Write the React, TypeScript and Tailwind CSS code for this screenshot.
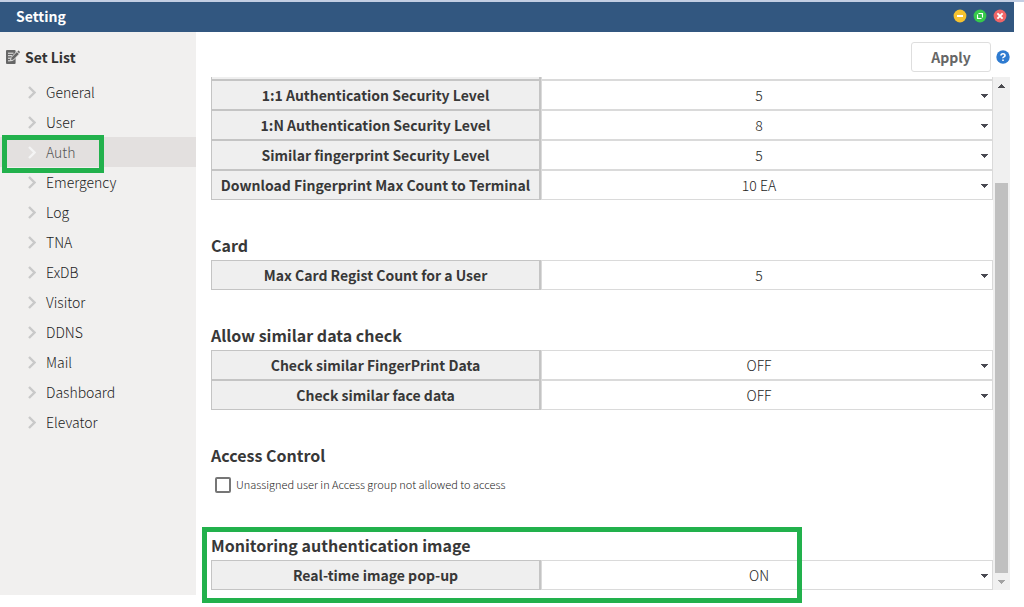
const items = ["General", "User", "Auth", "Emergency", "Log", "TNA", "ExDB", "Visitor", "DDNS", "Mail", "Dashboard", "Elevator"];

function Row({ label, value }: { label: string; value: string }) {
  return (
    <div className="flex h-[30px]">
      <div className="flex w-[330px] items-center justify-center border border-r-2 border-[#c4c4c4] bg-[#efefef] text-[14px] font-bold whitespace-nowrap text-[#383838]">
        {label}
      </div>
      <div className="flex flex-1 items-center border border-[#dadada] pr-1">
        <span className="flex-1 pr-[12px] text-center text-[14px] font-light">{value}</span>
        <svg width="7" height="4" viewBox="0 0 7 4" shapeRendering="crispEdges" className="-ml-[7px] mt-[1px] text-[#4a4a52]">
          <path d="M0 0h7v1H6v1H5v1H4v1H3V3H2V2H1V1H0z" fill="currentColor" />
        </svg>
      </div>
    </div>
  );
}

function Heading({ children }: { children: string }) {
  return <h2 className="flex h-[30px] items-center text-[16px] font-bold whitespace-nowrap text-[#383838]">{children}</h2>;
}

export default function App() {
  return (
    <div className="relative h-[607px] w-[1024px] overflow-hidden bg-white font-['Noto_Sans_CJK_KR','Noto_Sans_CJK_JP',sans-serif] text-[#1c1c1c]">
      <div className="h-[2px] bg-[#c3cee3]" />
      <header className="flex h-[30px] w-[1014px] items-center justify-between bg-[#325780] pr-2 pl-4">
        <h1 className="mb-[2px] text-[14px] font-bold text-white">Setting</h1>
        <div className="-mr-px flex gap-[6px] pb-[2px]">
          <svg width="14" height="14" viewBox="0 0 14 14"><circle cx="7" cy="7" r="6.4" fill="#f6c22f" /><path d="M4 7h6" stroke="#fff" strokeWidth="2" /></svg>
          <svg width="14" height="14" viewBox="0 0 14 14"><circle cx="7" cy="7" r="6.4" fill="#36c84b" /><path d="M5.5 4.5h4v4M8.5 9.5h-4v-4" stroke="#fff" strokeWidth="1.1" fill="none" /><path d="M7.4 4h2.6v2.6zM6.6 10H4V7.4z" fill="#fff" /></svg>
          <svg width="14" height="14" viewBox="0 0 14 14"><circle cx="7" cy="7" r="6.4" fill="#ef6567" /><path d="M4.4 4.4l5.2 5.2M9.6 4.4L4.4 9.6" stroke="#fff" strokeWidth="1.9" /></svg>
        </div>
      </header>
      <div className="flex">
        <aside className="h-[563px] w-[196px] bg-[#f1f0ef] pt-[10px]">
          <div className="flex h-[30px] items-center pl-[6px]">
            <svg width="14" height="14" viewBox="0 0 14 14">
              <rect x="0" y="0" width="9.6" height="14" rx="1" fill="#666" />
              <path d="M2 3.2h5.5M2 5.7h4M2 8.2h2.5M2 10.8h2" stroke="#f1f0ef" strokeWidth="1" />
              <path d="M5 7.6l5.9-6 2.5 2.4-5.9 6-3 .9z" fill="#666" stroke="#f1f0ef" strokeWidth="0.9" />
              <path d="M11.4 1.5l.8-.8q.3-.3.6 0l1 1q.4.3 0 .7l-.8.8z" fill="#666" />
            </svg>
            <span className="ml-[5px] text-[14px] font-bold text-[#333]">Set List</span>
          </div>
          <nav className="mt-[5px] text-[14px] font-light">
            {items.map((t) => (
              <div key={t} className={t === "Auth" ? "flex h-[30px] items-center bg-[#e3e0df] pl-[28px] text-[#555]" : "flex h-[30px] items-center pl-[28px]"}>
                <svg width="8" height="13" viewBox="0 0 8 13" className="mr-[10px]">
                  <path d="M1 1l5.5 5.5L1 12" fill="none" stroke={t === "Auth" ? "#f4f4f4" : "#c9c9c9"} strokeWidth="2.4" />
                </svg>
                {t}
              </div>
            ))}
          </nav>
        </aside>
        <main className="w-[828px] pt-[10px]">
          <div className="ml-[715px] flex h-[30px] items-center">
            <button className="h-[30px] w-[80px] rounded-[3px] border border-[#dedede] text-[14px] font-bold text-[#666]">Apply</button>
            <svg width="14" height="14" viewBox="0 0 14 14" className="ml-[5px]">
              <circle cx="7" cy="7" r="6.7" fill="#2e7bd0" />
              <path d="M5 5.6Q5 3.7 7 3.7T9 5.4Q9 6.3 7.9 6.9T7 8.3M7 9.4v1.5" stroke="#fff" strokeWidth="1.6" fill="none" />
            </svg>
          </div>
          <div className="mt-[5px] ml-[15px] flex h-[513px]">
            <div className="w-[782px]">
              <div className="flex h-[3px]">
                <div className="w-[330px] border border-t-0 border-r-2 border-[#c4c4c4] bg-[#efefef]" />
                <div className="flex-1 border border-t-0 border-[#dadada]" />
              </div>
              <Row label="1:1 Authentication Security Level" value="5" />
              <Row label="1:N Authentication Security Level" value="8" />
              <Row label="Similar fingerprint Security Level" value="5" />
              <Row label="Download Fingerprint Max Count to Terminal" value="10 EA" />
              <div className="h-[30px]" />
              <Heading>Card</Heading>
              <Row label="Max Card Regist Count for a User" value="5" />
              <div className="h-[30px]" />
              <Heading>Allow similar data check</Heading>
              <Row label="Check similar FingerPrint Data" value="OFF" />
              <Row label="Check similar face data" value="OFF" />
              <div className="h-[30px]" />
              <Heading>Access Control</Heading>
              <div className="flex h-[30px] items-center pl-1">
                <span className="h-4 w-4 rounded-[2px] border-2 border-[#767676] bg-white" />
                <span className="mb-[2px] ml-[5px] text-[11px] font-light whitespace-nowrap">Unassigned user in Access group not allowed to access</span>
              </div>
              <div className="h-[30px]" />
              <Heading>Monitoring authentication image</Heading>
              <Row label="Real-time image pop-up" value="ON" />
            </div>
            <div className="flex w-[17px] flex-col items-center bg-[#f0f0f0]">
              <div className="flex h-[106px] w-full justify-center pt-[7px]">
                <svg width="7" height="4" viewBox="0 0 7 4" shapeRendering="crispEdges"><path d="M3 0h1v1h1v1h1v1h1v1H0V3h1V2h1V1h1z" fill="#4a4a4f" /></svg>
              </div>
              <div className="h-[390px] w-[13px] bg-[#c0c0c0]" />
              <div className="flex h-[17px] w-full items-center justify-center">
                <svg width="7" height="4" viewBox="0 0 7 4" shapeRendering="crispEdges"><path d="M0 0h7v1H6v1H5v1H4v1H3V3H2V2H1V1H0z" fill="#a3a3a3" /></svg>
              </div>
            </div>
          </div>
        </main>
      </div>
      <div className="absolute top-[135px] left-[2px] h-[38px] w-[102px] border-5 border-[#22b14c]" />
      <div className="absolute top-[527px] left-[202px] h-[76px] w-[600px] border-5 border-[#22b14c]" />
    </div>
  );
}
